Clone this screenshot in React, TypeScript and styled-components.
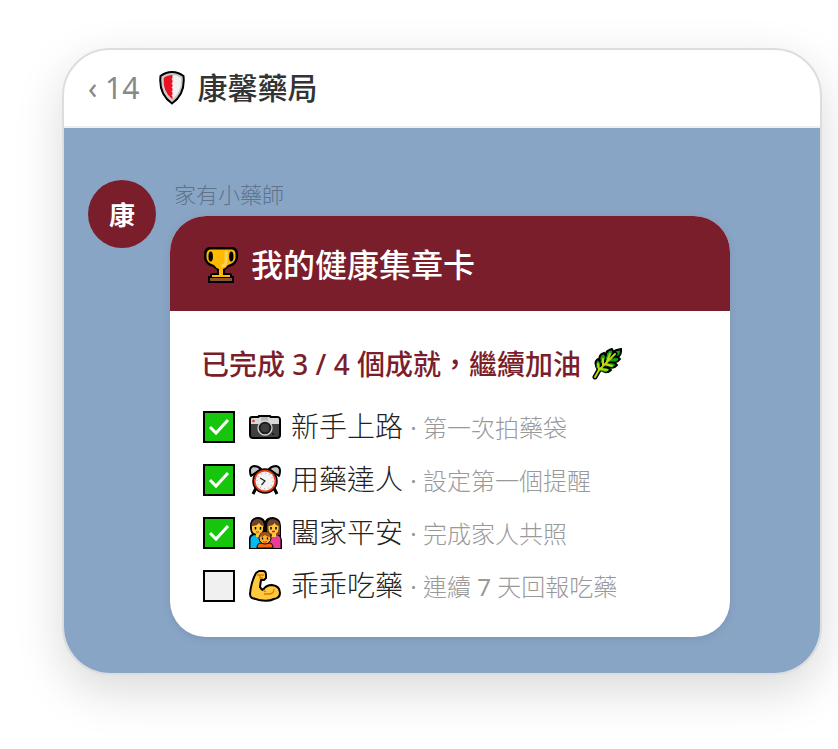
import React from "react";
import styled, { createGlobalStyle } from "styled-components";

const GlobalStyle = createGlobalStyle`
  *, *::before, *::after { box-sizing: border-box; }
  body {
    margin: 0;
    background: #fff;
    color: #222;
    font-family: "Noto Sans", "Noto Sans CJK TC", sans-serif;
    font-weight: 300;
  }
`;

const Page = styled.main`
  padding: 48px 16px 74px 62px;
`;

const Phone = styled.section`
  max-width: 760px;
  border: 2px solid #dddddd;
  border-radius: 48px;
  overflow: hidden;
  background: #fff;
  box-shadow: 0 16px 48px rgba(0, 0, 0, 0.15);
`;

const TopBar = styled.header`
  display: flex;
  align-items: center;
  height: 78px;
  padding: 0 24px;
  border-bottom: 2px solid #eeeeee;
`;

const BackButton = styled.button`
  padding: 0;
  border: 0;
  background: none;
  color: #888;
  font: inherit;
  font-size: 30px;
  font-weight: 400;
  line-height: 40px;
  cursor: pointer;
`;

const ChatTitle = styled.h1`
  display: flex;
  align-items: center;
  gap: 12px;
  margin: 0 0 0 20px;
  color: #333;
  font-size: 30px;
  font-weight: 500;
  line-height: 40px;
`;

const Chat = styled.div`
  display: flex;
  align-items: flex-start;
  gap: 14px;
  padding: 52px 24px 36px;
  background: #89a5c6;
`;

const Avatar = styled.div`
  display: grid;
  place-items: center;
  flex: none;
  width: 68px;
  height: 68px;
  border-radius: 50%;
  background: #7b1e2b;
  color: #fff;
  font-size: 26px;
  font-weight: 700;
`;

const Message = styled.div`
  flex: 1;
  min-width: 0;
  max-width: 560px;
`;

const Sender = styled.div`
  padding-left: 4px;
  color: #5f7389;
  font-size: 22px;
  line-height: 28px;
  margin-bottom: 8px;
`;

const Card = styled.article`
  overflow: hidden;
  border-radius: 36px;
  background: #fff;
  box-shadow: 0 2px 8px rgba(0, 0, 0, 0.1);
`;

const CardHeader = styled.h2`
  display: flex;
  align-items: center;
  gap: 13px;
  margin: 0;
  padding: 25px 34px 22px;
  background: #7b1e2b;
  color: #fff;
  font-size: 32px;
  font-weight: 500;
  line-height: 48px;
`;

const CardBody = styled.div`
  padding: 32px 32px 25px 31px;
`;

const Progress = styled.p`
  display: flex;
  align-items: center;
  gap: 11px;
  margin: 0 0 15px;
  color: #7b1e2b;
  font-size: 28px;
  font-weight: 500;
  line-height: 42px;
`;

const List = styled.ul`
  margin: 0;
  padding: 0;
  list-style: none;
`;

const Row = styled.label`
  display: grid;
  grid-template-columns: 32px 34px 1fr;
  align-items: center;
  height: 53px;
  padding-left: 2px;
  column-gap: 14px;
`;

const Tick = styled.input`
  appearance: none;
  display: block;
  width: 32px;
  height: 32px;
  margin: 0;
  border: 2px solid #000;
  background: #f0f0f0;

  &:checked {
    background: #16c60c
      url("data:image/svg+xml,%3Csvg xmlns='http://www.w3.org/2000/svg' viewBox='0 0 28 28'%3E%3Cpath d='M5 14l6 6L23 7' fill='none' stroke='white' stroke-width='3'/%3E%3C/svg%3E")
      center / 28px 28px no-repeat;
  }
`;

const Achievement = styled.span`
  margin-left: -6px;
  font-size: 28px;
  line-height: 42px;
  white-space: nowrap;
`;

const Detail = styled.small`
  color: #999;
  font-size: 24px;
`;

const Digits = styled.span`
  font-weight: 400;
`;

const Icon = styled.svg`
  display: block;
  flex: none;
`;

const Shield = () => (
  <Icon width="26" height="34" viewBox="0 0 26 34" aria-hidden="true">
    <path d="M13 1Q19 1 24.500 5Q26.500 23 13 32.500Q-.5 23 1.500 5Q7 1 13 1Z" fill="#c8c8c8" stroke="#000" strokeWidth="2" />
    <path d="M13 4Q18 4 22 7Q23 21 13 28.500Q3 21 4 7Q8 4 13 4Z" fill="#f2f2f2" />
    <path d="M13.500 4Q8 4 4.500 7Q3.500 21 13.500 28.500v-3l-1-1 1-1v-2l-1-1 1-1v-2l-1-1 1-1v-2l-1-1 1-1V9l-1-1 1-1Z" fill="#e81224" />
  </Icon>
);

const Trophy = () => (
  <Icon width="34" height="36" viewBox="0 0 34 36" aria-hidden="true">
    <path d="M5 0H29Q34 1 34 7V11Q33 18 25 20Q22 22 21 23V26H26Q28 26 28 29H30V36H4V29H6Q6 26 9 26H13V23Q12 22 9 20Q1 18 0 11V7Q0 1 5 0Z" fill="#000" />
    <path d="M6 2.500H28Q31.500 3 31.500 7V11Q31 16 24 18Q22 21 19 22V28H26V30H8V28H15V22Q12 21 10 18Q3 16 2.500 11V7Q3 3 6 2.500Z" fill="#ffb900" />
    <ellipse cx="6.700" cy="9.500" rx="2.200" ry="5" fill="#000" />
    <ellipse cx="27.300" cy="9.500" rx="2.200" ry="5" fill="#000" />
    <path d="M6 31H28V34H6Z" fill="#8e562e" />
    <path d="M22 5V14Q22 18 18.500 19" fill="none" stroke="#ffd25c" strokeWidth="3" strokeLinecap="round" />
  </Icon>
);

const Leaf = () => (
  <Icon width="30" height="32" viewBox="0 0 30 32" aria-hidden="true">
    <g stroke="#000" strokeWidth="2" fill="#13a10e">
      <path d="M18 11Q17 3 29 1Q30 11 18 11Z" />
      <path d="M15 12Q11 3 20 1Q24 7 15 12Z" />
      <path d="M10 16Q4 8 12 5Q17 10 10 16Z" />
      <path d="M6 22Q1 14 6 11Q12 16 6 22Z" />
      <path d="M17 12Q24 6 28 11Q24 17 17 12Z" />
      <path d="M13 16Q21 12 25 17Q20 23 13 16Z" />
      <path d="M8 21Q15 17 19 22Q14 27 8 21Z" />
    </g>
    <path d="M3 29L7 22L23 6" fill="none" stroke="#000" strokeWidth="5" strokeLinecap="round" />
    <path d="M15 11l3-6M10 15l1-6M6 20l0-5M17 12h7M13 16l8 2M8 21l7 2" stroke="#13a10e" strokeWidth="3" />
    <path d="M3 29L7 22L23 6M7 22L6 16M11 18V11M15 13l3-7M9 21l6 1M13 16l7 2" fill="none" stroke="#bad80a" strokeWidth="2" strokeLinecap="round" />
  </Icon>
);

const Camera = () => (
  <Icon width="32" height="24" viewBox="0 0 32 24" aria-hidden="true">
    <path d="M3 2H9L10 1H21L22 2H28Q31 2 31 5V20Q31 23 28 23H4Q1 23 1 20V4Q1 2 3 2Z" fill="#404040" stroke="#000" strokeWidth="2" />
    <path d="M2 9V4Q2 3 4 3H10L11 2H20L21 3H29Q30 3 30 5V9Z" fill="#d8d8d8" />
    <path d="M12 2h7v4h-7z" fill="#b5b5b5" />
    <circle cx="4.500" cy="6" r="1.300" fill="#f03a17" />
    <circle cx="16" cy="13" r="7" fill="#222" stroke="#d2d2d2" strokeWidth="1.300" />
    <circle cx="16" cy="13" r="5" fill="#3c3c3c" stroke="#171717" />
    <circle cx="24" cy="19" r="1" fill="#111" />
  </Icon>
);

const Clock = () => (
  <Icon width="32" height="30" viewBox="0 0 32 30" aria-hidden="true">
    <path d="M7 23L4 29M25 23L28 29" stroke="#000" strokeWidth="3" />
    <path d="M2 11Q-1 2 5 1Q9 1 12 4ZM30 11Q33 2 27 1Q23 1 20 4Z" fill="#c5c5c5" stroke="#000" strokeWidth="2" strokeLinejoin="round" />
    <circle cx="16" cy="16" r="12" fill="#f03a17" stroke="#000" strokeWidth="1.500" />
    <circle cx="16" cy="16" r="9.500" fill="#f4f4f4" />
    <circle cx="16" cy="16" r="7.800" fill="none" stroke="#999" strokeWidth="1" strokeDasharray="1 3.080" />
    <path d="M11 13L16 16L12.500 20" fill="none" stroke="#222" strokeWidth="1.200" />
  </Icon>
);

const Family = () => (
  <Icon width="34" height="32" viewBox="0 0 34 32" aria-hidden="true">
    <path d="M0 32V22Q0 18 3 17Q1 15 1 9Q1 0 9 0Q14 0 16 4Q18 0 24 0Q32 1 32 9V20L33 23V32Z" fill="#000" />
    <path d="M1.500 31V22Q2 18 8 18Q13 18 13 23V31Z" fill="#00bcf2" />
    <path d="M19 31V22Q20 18 26 18Q31.500 18 31.500 23V31Z" fill="#e83e98" />
    <path d="M2.500 10Q2 2 9 2Q15 2 15 10ZM18 17V9Q18 2 24 2Q31 3 31 10V18H18Z" fill="#71422b" />
    <path d="M3 9Q8 9 10 6Q12 9 14 9V12Q14 17 8.500 17Q3 17 3 12ZM19.500 9Q24 9 25.500 6Q27 9 29.500 9V12Q29.500 17 24.500 17Q19.500 17 19.500 12ZM7 16h4v4H7zM23 16h4v4h-4z" fill="#ffc83d" />
    <path d="M6.500 10v2.500M11.500 10v2.500M22 10v2.500M27 10v2.500" stroke="#000" strokeWidth="1.500" />
    <path d="M8 31Q8 26 12 26H20Q24 26 24 31Z" fill="#f7630c" stroke="#000" />
    <circle cx="16" cy="21" r="6" fill="#ffb02e" stroke="#000" />
    <path d="M10.500 20Q10.500 15 16 15Q21.500 15 21.500 20Q18 20 16 18Q14 20 10.500 20Z" fill="#a4501d" />
    <path d="M13.500 20.500v2M18.500 20.500v2" stroke="#000" strokeWidth="1.300" />
    <path d="M14 24.500Q16 26 18 24.500M7 15h3" fill="none" stroke="#b5461b" />
    <path d="M23 14.500h3" stroke="#e81224" strokeWidth="1.500" />
  </Icon>
);

const Muscle = () => (
  <Icon width="32" height="32" viewBox="0 0 32 32" aria-hidden="true">
    <path d="M7 3L10 1H14Q17 1 17 5V8L15 10H12L11 17Q12 19 14 20Q17 15 23 15Q31 16 31 23Q31 28 25 29Q19 32 10 30L3 28Q1 27 1 24Q2 12 7 3Z" fill="#ffc83d" stroke="#000" strokeWidth="2" strokeLinejoin="round" />
    <path d="M8 5H15M11 5V8H14M14 20L17 22M15 24H20Q25 24 25 19" fill="none" stroke="#d67d00" strokeWidth="1.300" />
  </Icon>
);

type Item = { done: boolean; icon: React.ReactNode; name: string; detail: React.ReactNode };

const items: Item[] = [
  { done: true, icon: <Camera />, name: "新手上路", detail: "第一次拍藥袋" },
  { done: true, icon: <Clock />, name: "用藥達人", detail: "設定第一個提醒" },
  { done: true, icon: <Family />, name: "闔家平安", detail: "完成家人共照" },
  { done: false, icon: <Muscle />, name: "乖乖吃藥", detail: <>連續 <Digits>7</Digits> 天回報吃藥</> },
];

export default function App() {
  return (
    <>
      <GlobalStyle />
      <Page lang="zh-Hant">
        <Phone>
          <TopBar>
            <BackButton type="button">‹ 14</BackButton>
            <ChatTitle>
              <Shield />
              康馨藥局
            </ChatTitle>
          </TopBar>
          <Chat>
            <Avatar>康</Avatar>
            <Message>
              <Sender>家有小藥師</Sender>
              <Card>
                <CardHeader>
                  <Trophy />
                  我的健康集章卡
                </CardHeader>
                <CardBody>
                  <Progress>
                    已完成 3 / 4 個成就，繼續加油
                    <Leaf />
                  </Progress>
                  <List>
                    {items.map((item) => (
                      <li key={item.name}>
                        <Row>
                          <Tick type="checkbox" defaultChecked={item.done} />
                          {item.icon}
                          <Achievement>
                            {item.name} <Detail><Digits>·</Digits> {item.detail}</Detail>
                          </Achievement>
                        </Row>
                      </li>
                    ))}
                  </List>
                </CardBody>
              </Card>
            </Message>
          </Chat>
        </Phone>
      </Page>
    </>
  );
}
